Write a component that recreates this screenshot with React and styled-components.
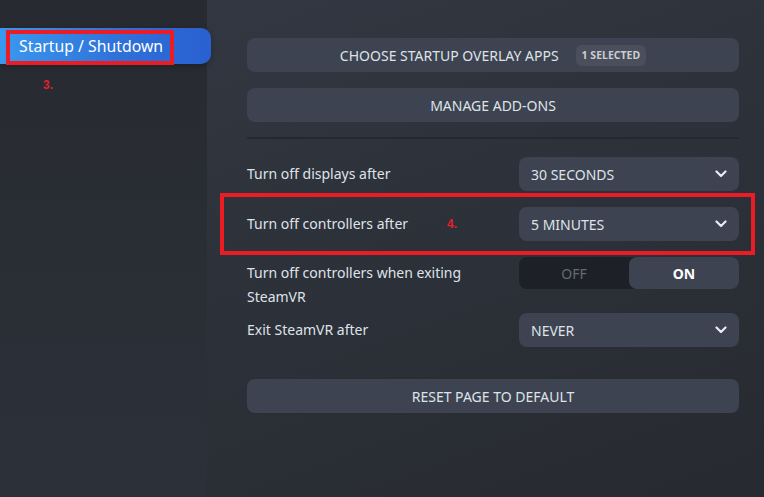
import React from "react";
import styled, { createGlobalStyle } from "styled-components";

const Global = createGlobalStyle`
  html, body {
    margin: 0;
    padding: 0;
    background: #2b2f37;
  }
  body {
    font-family: "Noto Sans", "Open Sans", sans-serif;
    -webkit-font-smoothing: antialiased;
  }
`;

const Page = styled.div`
  display: grid;
  grid-template-columns: 207px 1fr;
  width: 764px;
  height: 497px;
  overflow: hidden;
`;

const Sidebar = styled.div`
  position: relative;
  z-index: 1;
  background: linear-gradient(180deg, #272a31 0%, #2c3038 100%);
  padding-top: 28px;
`;

const NavItem = styled.div`
  position: relative;
  display: flex;
  align-items: center;
  width: 211px;
  height: 36px;
  box-sizing: border-box;
  padding-left: 19px;
  border-radius: 0 10px 10px 0;
  background: linear-gradient(90deg, #3a98ee 0%, #2e6fd8 60%, #2a60d0 100%);
  color: #fff;
  font-size: 15.8px;
  box-shadow: 0 2px 6px rgba(0, 0, 0, 0.25);
`;

// red annotation marks drawn over the screenshot
const MarkBox = styled.div`
  position: absolute;
  box-sizing: border-box;
  border: 4px solid #ec1c24;
  pointer-events: none;
  left: ${(p) => p.$l}px;
  top: ${(p) => p.$t}px;
  width: ${(p) => p.$w}px;
  height: ${(p) => p.$h}px;
`;

const MarkNum = styled.span`
  position: absolute;
  left: ${(p) => p.$l}px;
  top: ${(p) => p.$t}px;
  color: #e42029;
  font-family: "Liberation Sans", Arial, sans-serif;
  font-weight: 700;
  font-size: 12px;
`;

const Main = styled.div`
  background: linear-gradient(160deg, #323741 0%, #2c3038 50%, #272a30 100%);
  padding: 38px 25px 0 40px;
  display: flex;
  flex-direction: column;
`;

const WideButton = styled.div`
  display: flex;
  align-items: center;
  justify-content: center;
  gap: 17px;
  height: 34px;
  margin-top: ${(p) => p.$mt || 0}px;
  border-radius: 8px;
  background: #3d4350;
  color: #dfe3e9;
  font-size: 14px;
`;

const Badge = styled.span`
  display: inline-flex;
  align-items: center;
  height: 21px;
  padding: 0 6px;
  border-radius: 6px;
  background: #4a4f5b;
  color: #c9cdd4;
  font-size: 10.5px;
  font-weight: 700;
`;

const Divider = styled.div`
  height: 2px;
  margin-top: 15px;
  background: #252830;
`;

const Row = styled.div`
  position: relative;
  display: grid;
  grid-template-columns: 272px 220px;
  align-items: ${(p) => (p.$top ? "start" : "center")};
  margin-top: ${(p) => p.$mt}px;
`;

const Label = styled.div`
  color: #dfe3e9;
  font-size: 14px;
  line-height: 24px;
  padding-top: ${(p) => (p.$top ? 4 : 0)}px;
  padding-right: 20px;
`;

const Select = styled.div`
  display: flex;
  align-items: center;
  justify-content: space-between;
  height: 34px;
  padding: 0 12px;
  border-radius: 8px;
  background: #3d4350;
  color: #dfe3e9;
  font-size: 14px;
`;

const Toggle = styled.div`
  display: grid;
  grid-template-columns: 1fr 1fr;
  height: 32px;
  border-radius: 8px;
  background: #1d2026;
`;

const ToggleSide = styled.div`
  display: flex;
  align-items: center;
  justify-content: center;
  border-radius: 8px;
  font-size: 14px;
  background: ${(p) => (p.$on ? "#3d4350" : "transparent")};
  color: ${(p) => (p.$on ? "#ffffff" : "#656a73")};
  font-weight: ${(p) => (p.$on ? 700 : 400)};
`;

const Chevron = () => (
  <svg width="12" height="8" viewBox="0 0 12 8">
    <path d="M1.5 1.5 L6 6 L10.5 1.5" fill="none" stroke="#e8ebef" strokeWidth="2.2" strokeLinecap="round" strokeLinejoin="round" />
  </svg>
);

export default function App() {
  return (
    <>
      <Global />
      <Page>
        <Sidebar>
          <NavItem>
            Startup / Shutdown
            <MarkBox $l={6} $t={2} $w={168} $h={35} />
          </NavItem>
          <MarkNum $l={43} $t={78}>3.</MarkNum>
        </Sidebar>
        <Main>
          <WideButton>
            CHOOSE STARTUP OVERLAY APPS
            <Badge>1 SELECTED</Badge>
          </WideButton>
          <WideButton $mt={16}>MANAGE ADD-ONS</WideButton>
          <Divider />

          <Row $mt={18}>
            <Label>Turn off displays after</Label>
            <Select>
              30 SECONDS
              <Chevron />
            </Select>
          </Row>
          <Row $mt={16}>
            <Label>Turn off controllers after</Label>
            <Select>
              5 MINUTES
              <Chevron />
            </Select>
            <MarkBox $l={-27} $t={-14} $w={535} $h={62} />
            <MarkNum $l={200} $t={10}>4.</MarkNum>
          </Row>
          <Row $mt={16} $top>
            <Label $top>Turn off controllers when exiting SteamVR</Label>
            <Toggle>
              <ToggleSide>OFF</ToggleSide>
              <ToggleSide $on>ON</ToggleSide>
            </Toggle>
          </Row>
          <Row $mt={4}>
            <Label>Exit SteamVR after</Label>
            <Select>
              NEVER
              <Chevron />
            </Select>
          </Row>
          <WideButton $mt={32}>RESET PAGE TO DEFAULT</WideButton>
        </Main>
      </Page>
    </>
  );
}
